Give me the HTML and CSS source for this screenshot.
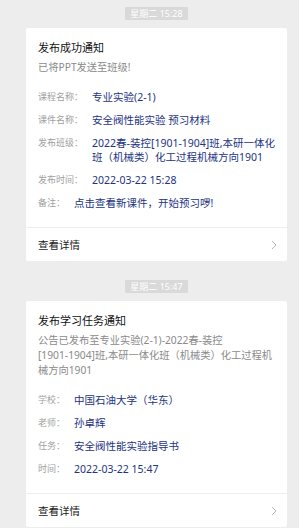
FILE: index.html
```html
<!DOCTYPE html>
<html lang="zh-CN">
<head>
    <meta charset="UTF-8">
    <meta name="viewport" content="width=device-width, initial-scale=1.0">
    <title>通知</title>
    <link rel="stylesheet" href="styles.css">
</head>
<body>
    <main class="feed">
        <!-- 第一条消息 -->
        <div class="time-row"><span class="time-pill">星期二 15:28</span></div>
        <section class="card">
            <div class="card-head">
                <h2 class="card-title">发布成功通知</h2>
                <p class="card-desc">已将PPT发送至班级!</p>
            </div>
            <dl class="rows">
                <div class="row"><dt>课程名称：</dt><dd>专业实验(2-1)</dd></div>
                <div class="row"><dt>课件名称：</dt><dd>安全阀性能实验 预习材料</dd></div>
                <div class="row"><dt>发布班级：</dt><dd>2022春-装控<span class="nobr">[1901-1904]</span>班,本研一体化班（机械类）化工过程机械方向1901</dd></div>
                <div class="row"><dt>发布时间：</dt><dd>2022-03-22 15:28</dd></div>
                <div class="row"><dt>备注：</dt><dd>点击查看新课件，开始预习啰!</dd></div>
            </dl>
            <a class="card-foot" href="#">
                <span>查看详情</span>
                <svg class="chevron" width="6" height="10" viewBox="0 0 6 10"><polyline points="1,1 5,5 1,9" fill="none" stroke="#b8b8b8" stroke-width="1"/></svg>
            </a>
        </section>

        <!-- 第二条消息 -->
        <div class="time-row"><span class="time-pill">星期二 15:47</span></div>
        <section class="card">
            <div class="card-head">
                <h2 class="card-title">发布学习任务通知</h2>
                <p class="card-desc">公告已发布至专业实验(2-1)-2022春-装控<span class="nobr">[1901-1904]</span>班,本研一体化班（机械类）化工过程机械方向1901</p>
            </div>
            <dl class="rows">
                <div class="row"><dt>学校：</dt><dd>中国石油大学（华东）</dd></div>
                <div class="row"><dt>老师：</dt><dd>孙卓辉</dd></div>
                <div class="row"><dt>任务：</dt><dd>安全阀性能实验指导书</dd></div>
                <div class="row"><dt>时间：</dt><dd>2022-03-22 15:47</dd></div>
            </dl>
            <a class="card-foot" href="#">
                <span>查看详情</span>
                <svg class="chevron" width="6" height="10" viewBox="0 0 6 10"><polyline points="1,1 5,5 1,9" fill="none" stroke="#b8b8b8" stroke-width="1"/></svg>
            </a>
        </section>
    </main>
</body>
</html>
```

FILE: styles.css
```css
/* pamata fons un fonts */
body {
    margin: 0;
    padding: 0;
    background: #ededed;
    font-family: "Noto Sans", "Noto Sans CJK SC", sans-serif;
    color: #222;
}
.feed {
    padding: 7px 12px 0 26px;
}
.time-row {
    display: flex;
    justify-content: center;
    margin-bottom: 8px;
}
.card + .time-row {
    margin-top: 19px;
}
.time-pill {
    display: block;
    height: 13px;
    line-height: 13px;
    padding: 0 5px;
    background: #d9d9d9;
    color: #fff;
    font-size: 9px;
    border-radius: 1px;
}
.card {
    background: #fff;
    border-radius: 2px;
}
.card-head {
    padding: 12px 10px 0 12px;
}
.card-title {
    margin: 0;
    font-size: 11px;
    line-height: 16px;
    font-weight: 400;
    color: #111;
}
.card-desc {
    margin: 4px 0 0;
    font-size: 10.25px;
    line-height: 15px;
    color: #8a8a8a;
}
.nobr {
    white-space: nowrap;
}
.rows {
    margin: 0;
    padding: 15px 4px 17px 12px;
    display: flex;
    flex-direction: column;
    gap: 9px;
}
.row {
    display: flex;
    font-size: 10.5px;
    line-height: 14px;
}
.row dt {
    flex: none;
    font-size: 9px;
    color: #a0a0a0;
    margin-right: 9px;
}
.row dd {
    margin: 0;
    color: #23337f;
}
.card-foot {
    display: flex;
    align-items: center;
    justify-content: space-between;
    height: 33px;
    padding: 0 10px 0 12px;
    border-top: 1px solid #eeeeee;
    text-decoration: none;
    color: #1a1a1a;
    font-size: 10.5px;
}
.chevron {
    display: block;
}
```
